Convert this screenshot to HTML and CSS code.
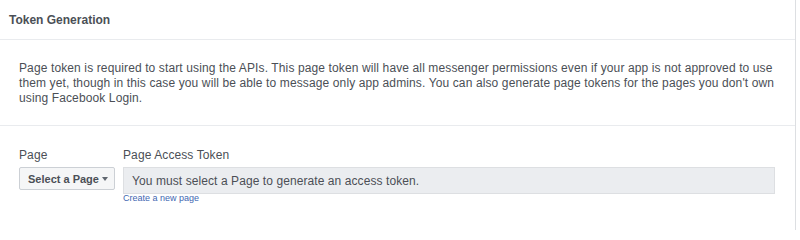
FILE: index.html
```html
<!DOCTYPE html>
<html>
<head>
<meta charset="utf-8">
<link rel="stylesheet" href="styles.css">
</head>
<body>
<div class="card">
  <div class="card-header">Token Generation</div>
  <div class="card-intro">
    <p>Page token is required to start using the APIs. This page token will have all messenger permissions even if your app is not approved to use them yet, though in this case you will be able to message only app admins. You can also generate page tokens for the pages you don't own using Facebook Login.</p>
  </div>
  <div class="card-form">
    <div class="field field-page">
      <label class="field-label">Page</label>
      <button class="select-btn">Select a Page <span class="caret"></span></button>
    </div>
    <div class="field field-token">
      <label class="field-label">Page Access Token</label>
      <div class="token-input">You must select a Page to generate an access token.</div>
      <a class="create-link" href="#">Create a new page</a>
    </div>
  </div>
</div>
</body>
</html>
```

FILE: styles.css
```css
html, body {
  margin: 0;
  padding: 0;
  background: #ffffff;
}
body {
  font-family: "Liberation Sans", Arial, sans-serif;
  color: #4b4f56;
  width: 800px;
  height: 230px;
  overflow: hidden;
}
.card {
  margin: -4px 0 0 -1px;
  width: 797px;
  height: 250px;
  box-sizing: border-box;
  border: 1px solid #dddfe2;
  border-radius: 4px;
  background: #fff;
}
.card-header {
  height: 43px;
  box-sizing: border-box;
  padding: 3px 0 0 9px;
  display: flex;
  align-items: center;
  font-size: 12px;
  font-weight: bold;
  color: #4b4f56;
  border-bottom: 1px solid #e9ebee;
}
.card-intro {
  padding: 21px 10px 19px 19px;
  border-bottom: 1px solid #e9ebee;
}
.card-intro p {
  margin: 0;
  font-size: 12px;
  line-height: 15px;
  letter-spacing: 0.12px;
  color: #4b4f56;
}
.card-form {
  display: flex;
  gap: 8px;
  padding: 22px 20px 0 19px;
}
.field {
  display: flex;
  flex-direction: column;
  align-items: flex-start;
}
.field-token {
  flex: 1;
  align-items: stretch;
}
.field-label {
  font-size: 12px;
  line-height: 15px;
  margin-bottom: 4px;
  letter-spacing: 0.1px;
  color: #4b4f56;
}
.select-btn {
  width: 96px;
  height: 23px;
  box-sizing: border-box;
  border: 1px solid #ccd0d5;
  border-radius: 2px;
  background: #f5f6f7;
  font-family: inherit;
  font-size: 11px;
  font-weight: bold;
  color: #4b4f56;
  padding: 0 0 0 8px;
  display: flex;
  align-items: center;
  gap: 3px;
  text-align: left;
}
.caret {
  width: 0;
  height: 0;
  border-left: 3.5px solid transparent;
  border-right: 3.5px solid transparent;
  border-top: 4px solid #606770;
}
.token-input {
  height: 27px;
  box-sizing: border-box;
  border: 1px solid #dddfe2;
  background: #ebedf0;
  padding: 0 8px;
  display: flex;
  align-items: center;
  font-size: 12px;
  letter-spacing: 0.08px;
  color: #4b4f56;
}
.create-link {
  margin-top: -1px;
  font-size: 9px;
  line-height: 11px;
  color: #4267b2;
  text-decoration: none;
  align-self: flex-start;
}
```
